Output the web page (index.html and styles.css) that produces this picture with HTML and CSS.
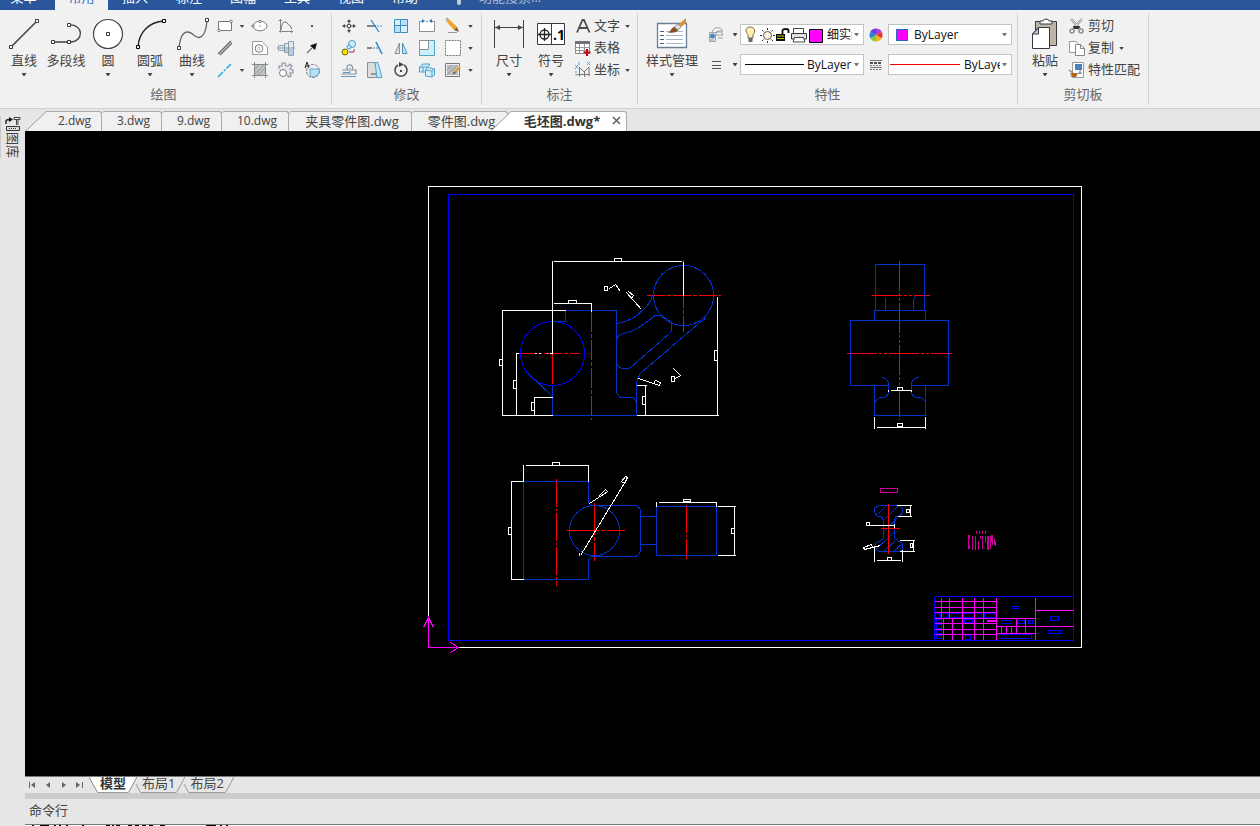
FILE: index.html
```
<!DOCTYPE html>
<html lang="zh-CN">
<head>
<meta charset="utf-8">
<title>毛坯图.dwg</title>
<link rel="stylesheet" href="styles.css">
</head>
<body>
<nav class="menubar">
  <button class="menu first">菜单</button>
  <button class="menu current">常用</button>
  <button class="menu">插入</button>
  <button class="menu">标注</button>
  <button class="menu">图幅</button>
  <button class="menu">工具</button>
  <button class="menu">视图</button>
  <button class="menu">帮助</button>
  <button class="menu search"><svg width="6" height="16" viewBox="0 0 6 16"><path d="M3 3V14" stroke="#c8cdd6" stroke-width="4" stroke-linecap="round"/></svg>功能搜索...</button>
</nav>

<section class="ribbon">
  <div class="group draw">
    <div class="tools">
      <button class="big"><svg width="36" height="36" viewBox="0 0 36 36"><path d="M5 32L31 6" stroke="#3f444c" stroke-width="1.6"/><g fill="#fff" stroke="#333a44"><path d="M3.5 30.5h3v3h-3zM29.500 4.500h3v3h-3z"/></g></svg><span>直线</span><i class="arrow"></i></button>
      <button class="big"><svg width="36" height="36" viewBox="0 0 36 36"><path d="M5 27H21M21 10C36 9 36 27 22 27" fill="none" stroke="#3f444c" stroke-width="1.300"/><g fill="#fff" stroke="#333a44"><path d="M3.500 25.500h3v3h-3zM19.500 25.500h3v3h-3zM19.500 8.500h3v3h-3z"/></g></svg><span>多段线</span></button>
      <button class="big"><svg width="36" height="36" viewBox="0 0 36 36"><circle cx="18" cy="19" r="14.500" fill="#fff" stroke="#3f444c" stroke-width="1.200"/><path d="M16.500 17.500h3v3h-3z" fill="#fff" stroke="#333a44"/></svg><span>圆</span><i class="arrow"></i></button>
      <button class="big"><svg width="36" height="36" viewBox="0 0 36 36"><path d="M6 32C7 17 17 7 32 6" fill="none" stroke="#222" stroke-width="1.400"/><path d="M4.500 30.500h3v3h-3zM30.500 4.500h3v3h-3z" fill="#fff" stroke="#000"/></svg><span>圆弧</span><i class="arrow"></i></button>
      <button class="big"><svg width="36" height="36" viewBox="0 0 36 36"><path d="M5 32C6 26 7 17 14 17C19 17 20 23 25 22.500C31 21 32 14 33 6" fill="none" stroke="#666" stroke-width="1.300"/><path d="M3.500 31.500h3v3h-3zM31.500 3.500h3v3h-3z" fill="#fff" stroke="#333a44"/></svg><span>曲线</span><i class="arrow"></i></button>
      <div class="grid draw-grid">
        <button aria-label="矩形"><svg width="18" height="18" viewBox="0 0 18 18"><path d="M2.500 4.500H15.500V13.500H2.500z" fill="#fff" stroke="#777"/><g fill="#fff" stroke="#777"><circle cx="15" cy="4.500" r="1.300"/><circle cx="3" cy="13.500" r="1.300"/></g></svg></button>
        <button aria-label="矩形选项"><i class="arrow"></i></button>
        <button aria-label="椭圆"><svg width="18" height="18" viewBox="0 0 18 18"><ellipse cx="9" cy="9" rx="7" ry="4.800" fill="#fff" stroke="#777"/><g fill="#fff" stroke="#777"><circle cx="2" cy="9" r="1.200"/><circle cx="9" cy="4.500" r="1.200"/></g><path d="M8.500 8.500h1v1h-1z" fill="#555"/></svg></button>
        <button aria-label="公式曲线"><svg width="18" height="18" viewBox="0 0 18 18"><path d="M3.500 2V15.500M1.500 3.500H5M2 14.500H16M14.500 13V16" fill="none" stroke="#888"/><path d="M4 13C5 3 9 2 15 12" fill="none" stroke="#666"/></svg></button>
        <button aria-label="点"><svg width="18" height="18" viewBox="0 0 18 18"><path d="M8 8h2v2H8z" fill="#555"/></svg></button>
        <button aria-label="平行线"><svg width="18" height="18" viewBox="0 0 18 18"><path d="M2 15L15 2M4 16L16 4" stroke="#666" stroke-width="1.400"/></svg></button>
        <span></span>
        <button aria-label="局部放大"><svg width="18" height="18" viewBox="0 0 18 18"><path d="M1.500 2.500H11L16.500 8V15.500H1.500z" fill="#fff" stroke="#999"/><circle cx="8" cy="9.500" r="3.800" fill="#fff" stroke="#777"/><circle cx="8" cy="9.500" r="1.200" fill="#fff" stroke="#bbb"/></svg></button>
        <button aria-label="孔轴"><svg width="18" height="18" viewBox="0 0 18 18"><path d="M1.500 6.500H7.500V4.500H11.500V2.500H16.500V16.500H11.500V13.500H7.500V11.500H1.500z" fill="#e4eaf1" stroke="#98a2ae"/><path d="M8 10H16V16H12V13H8z" fill="#b2ccea"/><path d="M0 9H18" stroke="#6e9cc8"/><path d="M7.500 5V13M11.500 3V16" stroke="#899"/></svg></button>
        <button aria-label="箭头"><svg width="18" height="18" viewBox="0 0 18 18"><path d="M4 14L9 9" stroke="#777" stroke-width="1.300"/><path d="M14 4L12 11L7 6.500z" fill="#111"/></svg></button>
        <button aria-label="中心线"><svg width="18" height="18" viewBox="0 0 18 18"><path d="M2 16L15 3" stroke="#1da5e8" stroke-width="1.400" stroke-dasharray="7 1.500 2 1.500"/></svg></button>
        <button aria-label="中心线选项"><i class="arrow"></i></button>
        <button aria-label="剖面线"><svg width="18" height="18" viewBox="0 0 18 18"><path d="M3 3H15V12L12 15H3z" fill="#bcc2c2"/><path d="M4 8L8 4M4 13L13 4M7 14L14 7" stroke="#9a9f9f"/><path d="M3.500 1V17M14.500 1V17M1 3.500H17M1 14.500H17" stroke="#888"/></svg></button>
        <button aria-label="齿轮"><svg width="18" height="18" viewBox="0 0 18 18"><path d="M2 8V5L5 5L5 2H8L9 5L11 5L13 3L15 5L13 8L16 9V12L13 12L14 15L12 16L10 14" fill="#e7e9ee" stroke="#8d949e" stroke-width="1.200"/><circle cx="6" cy="12" r="3.500" fill="#fff" stroke="#777"/></svg></button>
        <button aria-label="文字填充"><svg width="18" height="18" viewBox="0 0 18 18"><circle cx="10" cy="10" r="6.500" fill="#eee" stroke="#777" stroke-dasharray="3 1"/><path d="M7 8H16C17 12 14 16 10 16C8 16 7 14 7 13z" fill="#b6e0f5" stroke="#6aa6cc"/><path d="M2 7L4 1L6 7M3 5H6" fill="none" stroke="#222"/></svg></button>
      </div>
    </div>
    <h2>绘图</h2>
  </div>

  <div class="group modify">
    <div class="tools">
      <div class="grid modify-grid">
        <button aria-label="平移"><svg width="18" height="18" viewBox="0 0 18 18"><path d="M9 2L11 5H7zM9 16L11 13H7zM2 9L5 7V11zM16 9L13 7V11z" fill="#44484e"/><path d="M9 4V7M9 11V14M4 9H7M11 9H14" stroke="#555"/><path d="M7.500 7.500h3v3h-3z" fill="#fff" stroke="#555"/></svg></button>
        <button aria-label="裁剪"><svg width="18" height="18" viewBox="0 0 18 18"><path d="M1 9H10" stroke="#555" stroke-width="1.400"/><path d="M11 9H17" stroke="#4e9ed8" stroke-dasharray="2 1"/><path d="M5 3L13 15" stroke="#2f86c8" stroke-width="1.300"/></svg></button>
        <button aria-label="阵列"><svg width="18" height="18" viewBox="0 0 18 18"><g stroke="#3d8ebf"><path d="M2.500 2.500h6v6h-6zM8.500 8.500h7v7h-7z" fill="#d9f0fc"/><path d="M8.500 2.500h7v6h-7zM2.500 8.500h6v7h-6z" fill="#b9e2fa"/></g></svg></button>
        <button aria-label="打断"><svg width="18" height="18" viewBox="0 0 18 18"><path d="M5 4.500H1.500V14.500H16.500V4.500H13M8 4.500H10" fill="#fff" stroke="#8b9096"/><path d="M4 2L7 4L4 6zM14 2L11 4L14 6z" fill="#1f78c0"/></svg></button>
        <button aria-label="擦除"><svg width="18" height="18" viewBox="0 0 18 18"><path d="M2 4L5 2L13 10L10 13z" fill="#eda52d"/><path d="M10 13L13 10L15 15z" fill="#7a5a3a"/><path d="M2 3L4 1" stroke="#aaa" stroke-width="2"/><path d="M4 15.500H13" stroke="#999"/></svg></button>
        <button aria-label="擦除选项"><i class="arrow"></i></button>
        <button aria-label="复制对象"><svg width="18" height="18" viewBox="0 0 18 18"><g fill="#cfeafa" stroke="#4a9dcc"><circle cx="12" cy="5" r="3.500"/><circle cx="9" cy="8" r="2"/></g><circle cx="5" cy="13" r="3" fill="#f7df00" stroke="#6d6d00"/><path d="M9 13H14V10" fill="none" stroke="#a33"/></svg></button>
        <button aria-label="延伸"><svg width="18" height="18" viewBox="0 0 18 18"><path d="M1 9H6" stroke="#555" stroke-width="1.400"/><path d="M7 9H12" stroke="#2f86c8" stroke-dasharray="2 1"/><path d="M10 3L16 15" stroke="#2f86c8" stroke-width="1.500"/></svg></button>
        <button aria-label="镜像"><svg width="18" height="18" viewBox="0 0 18 18"><path d="M7.500 4V14.500H3z" fill="#ddd" stroke="#8b9096"/><path d="M10.500 4V14.500H15z" fill="#c3e6f7" stroke="#4b90b8"/></svg></button>
        <button aria-label="缩放"><svg width="18" height="18" viewBox="0 0 18 18"><path d="M1.500 1.500H16.500V16.500H1.500z" fill="#cdeefb" stroke="#55a5c8"/><path d="M1.500 1.500H10.500V10.500H1.500z" fill="#fff" stroke="#8b9096"/></svg></button>
        <button aria-label="拉伸"><svg width="18" height="18" viewBox="0 0 18 18"><path d="M1.500 1.500H16.500V16.500H1.500z" fill="#fff" stroke="#777" stroke-dasharray="2 1"/></svg></button>
        <button aria-label="拉伸选项"><i class="arrow"></i></button>
        <button aria-label="等距线"><svg width="18" height="18" viewBox="0 0 18 18"><path d="M1.500 13H16V9H12C15 3 6 2 7 7L8 9H2" fill="none" stroke="#8b9096" stroke-width="1.200"/><path d="M1 15.500H16M3 11.500H10V7" fill="none" stroke="#5a9dcc"/></svg></button>
        <button aria-label="过渡"><svg width="18" height="18" viewBox="0 0 18 18"><path d="M1.500 1.500H9L12 16.500H1.500z" fill="#ddd" stroke="#8b9096"/><path d="M9 1.500H12L16 16.500H11z" fill="#bfe7f8" stroke="#5ba5c8"/><path d="M5 13H10" stroke="#555"/></svg></button>
        <button aria-label="旋转"><svg width="18" height="18" viewBox="0 0 18 18"><path d="M6 4A6 6 0 1 0 12 4" fill="none" stroke="#444" stroke-width="1.500"/><path d="M7 1L12 3.500L7 6z" fill="#444"/><path d="M8 9h2v2H8z" fill="#444"/></svg></button>
        <button aria-label="三维块"><svg width="18" height="18" viewBox="0 0 18 18"><g stroke="#4ba0cc" fill="#d5effa"><path d="M1.500 6L5 3H12L9 6.500V11H1.500z"/><path d="M1.500 6H9M5 6V11" fill="none"/><path d="M7.500 9L10 6.500L16.500 8V14L14 16L7.500 15z"/><path d="M7.500 9L14 10V16M14 10L16.500 8" fill="none"/></g></svg></button>
        <button aria-label="块编辑"><svg width="18" height="18" viewBox="0 0 18 18"><path d="M1.500 2.500H15.500V15.500H1.500z" fill="#eee" stroke="#777"/><path d="M3 4H14V14H3z" fill="#b9bdbd"/><path d="M3 9L8 4M3 14L13 4M8 14L14 8" stroke="#999"/><path d="M16 6L11 11" stroke="#e0a02a" stroke-width="2.200"/><path d="M9 13L10 10.500L12 12z" fill="#444"/></svg></button>
        <button aria-label="块编辑选项"><i class="arrow"></i></button>
      </div>
    </div>
    <h2>修改</h2>
  </div>

  <div class="group dims">
    <div class="tools">
      <button class="big"><svg width="36" height="36" viewBox="0 0 36 36"><path d="M3.500 5V33M32.500 5V33M4 12.500H32" stroke="#3f444c"/><path d="M4 12.500L9 10V15zM32 12.500L27 10V15z" fill="#3f444c"/></svg><span>尺寸</span><i class="arrow"></i></button>
      <button class="big"><svg width="36" height="36" viewBox="0 0 36 36"><path d="M4.500 8.500H31.500V29.500H4.500zM18.500 8.500V29.500" fill="#fff" stroke="#333a44"/><circle cx="11.500" cy="19.500" r="4.500" fill="none" stroke="#222" stroke-width="1.300"/><path d="M5 19.500H18M11.500 13V26" stroke="#222" stroke-width="1.300"/><text class="tol" x="20" y="25">.1</text></svg><span>符号</span><i class="arrow"></i></button>
      <div class="rows">
        <button class="row"><svg width="18" height="18" viewBox="0 0 18 18"><path d="M3 15.500L8.500 3H10L15.500 15.500M5 11H13.500" fill="none" stroke="#4a4d52" stroke-width="1.800"/></svg><span>文字</span><i class="arrow"></i></button>
        <button class="row"><svg width="18" height="18" viewBox="0 0 18 18"><path d="M1.500 2.500H15.500V14.500H1.500z" fill="#fff" stroke="#888"/><path d="M1 2H16V5H1z" fill="#6d7278"/><path d="M1 8.500H16M1 11.500H16M5.500 5V15M10.500 5V15" stroke="#999"/><path d="M13 10V17M9.500 13.500H16.500" stroke="#c00018" stroke-width="2"/></svg><span>表格</span></button>
        <button class="row"><svg width="18" height="18" viewBox="0 0 18 18"><path d="M5.500 6V15.500M3 13.500H16M6 7L10 11L15 6V15M10.500 10V16" fill="none" stroke="#777"/><path d="M1 4L4 7M4 4L1 8M13 1L16 4M16 1L13 4M5 1V4M1 11H3M1 14H3" stroke="#58a5d4"/></svg><span>坐标</span><i class="arrow"></i></button>
      </div>
    </div>
    <h2>标注</h2>
  </div>

  <div class="group props">
    <div class="tools">
      <button class="big wide"><svg width="36" height="36" viewBox="0 0 36 36"><path d="M3.500 8.500H32.500V32.500H3.500z" fill="#fff" stroke="#6b8096" stroke-width="1.300"/><path d="M6 16.500H10M6 20.500H10M6 24.500H10M6 28.500H10" stroke="#4d5f80"/><path d="M12 16.500H29M12 20.500H29M12 24.500H29M12 28.500H29" stroke="#aab6c8"/><path d="M32 3L24 10L27 12L32 8z" fill="#d99438"/><path d="M24 9L27 12L24 15L20 12z" fill="#ddd" stroke="#999"/><path d="M20 12L24 15C22 19 18 17 14 18C17 16 17 13 20 12z" fill="#83502a"/></svg><span>样式管理</span><i class="arrow"></i></button>
      <div class="prop-grid">
        <button aria-label="图层"><svg width="18" height="18" viewBox="0 0 18 18"><path d="M5 6L8 2H13L16 5H10L8 9zM8 9L10 6H14L16 9H10z" fill="#fff" stroke="#999"/><path d="M2.500 6.500H8.500V15.500H2.500z" fill="#e5e8eb" stroke="#9aa"/><circle cx="5.500" cy="10" r="2.500" fill="#4d87b8"/><path d="M3 14H7M11 12H16" stroke="#8aa"/></svg></button>
        <button aria-label="图层选项"><i class="arrow"></i></button>
        <label class="field"><svg width="86" height="18" viewBox="0 0 86 18" aria-hidden="true"><path d="M9 1C4 1 4 6 7 8.500V12H12V8.500C15 6 14 1 9 1z" fill="#ffefae" stroke="#7a6a48"/><path d="M7.500 12H11.500V16H7.500z" fill="#666"/><circle cx="26.500" cy="9.500" r="4" fill="#fff8df" stroke="#555"/><path d="M26.500 2V4M26.500 15V17M19 9.500H21M32 9.500H34M21 4L22.500 5.500M32 4L30.500 5.500M21 15L22.500 13.500M32 15L30.500 13.500" stroke="#333"/><path d="M41.500 9V4.500C41.500 2.500 47.500 2.500 47.500 4.500V7" fill="none" stroke="#111" stroke-width="1.800"/><path d="M35 8H44V15H35z" fill="#111"/><path d="M36 10H43M36 12.500H43" stroke="#c6c200"/><path d="M52.500 7V2.500H62.500V7" fill="#fff" stroke="#444"/><path d="M50.500 7.500H65.500V13H50.500z" fill="#dce2ea" stroke="#333"/><path d="M53.500 11.500H62.500L64 16H52z" fill="#fff" stroke="#444"/><path d="M68.500 3.500H81.500V16.500H68.500z" fill="#f0f" stroke="#000"/></svg><select aria-label="当前图层"><option>细实线层</option></select><i class="arrow"></i></label>
        <button aria-label="颜色"><svg width="18" height="18" viewBox="0 0 18 18"><path d="M9 9V2.500A6.500 6.500 0 0 1 14.600 5.750z" fill="#a63fe0"/><path d="M9 9L14.600 5.750A6.500 6.500 0 0 1 14.600 12.250z" fill="#e93235"/><path d="M9 9L14.600 12.250A6.500 6.500 0 0 1 9 15.500z" fill="#f2b51f"/><path d="M9 9V15.500A6.500 6.500 0 0 1 3.400 12.250z" fill="#7ccf3a"/><path d="M9 9L3.400 12.250A6.500 6.500 0 0 1 3.400 5.750z" fill="#2a7fd8"/><path d="M9 9L3.400 5.750A6.500 6.500 0 0 1 9 2.500z" fill="#6a3fe0"/></svg></button>
        <label class="field color"><span class="swatch"></span><select aria-label="颜色"><option>ByLayer</option></select><i class="arrow"></i></label>

        <button aria-label="线型"><svg width="18" height="18" viewBox="0 0 18 18"><path d="M5 5.500H14M5 9.500H14M5 12.500H14" stroke="#555"/></svg></button>
        <button aria-label="线型选项"><i class="arrow"></i></button>
        <label class="field line"><span class="sample black"></span><select aria-label="线型"><option>ByLayer</option></select><i class="arrow"></i></label>
        <button aria-label="线宽"><svg width="18" height="18" viewBox="0 0 18 18"><path d="M3 4.500H15M3 11.500H15" stroke="#777"/><path d="M3 7H15" stroke="#555" stroke-width="2" stroke-dasharray="3 1"/><path d="M3 9.500H15M3 13.500H15" stroke="#777" stroke-dasharray="2 1"/></svg></button>
        <label class="field weight"><span class="sample red"></span><select aria-label="线宽"><option>ByLayer</option></select><i class="arrow"></i></label>
      </div>
    </div>
    <h2>特性</h2>
  </div>

  <div class="group clip">
    <div class="tools">
      <button class="big"><svg width="36" height="36" viewBox="0 0 36 36"><path d="M8.500 6.500H29.500V30.500H8.500z" fill="#beb4a8" stroke="#333a44"/><path d="M13 9V6H16C16 3.500 22 3.500 22 6H25V9z" fill="#fff" stroke="#333a44"/><path d="M11 12.500H22.500V33.500H5.500V19z" fill="#fff" stroke="#333a44"/><path d="M11.500 13V19H5.500z" fill="#ccc" stroke="#333a44"/></svg><span>粘贴</span><i class="arrow"></i></button>
      <div class="rows">
        <button class="row"><svg width="18" height="18" viewBox="0 0 18 18"><path d="M3 2L12 12M14 2L5 12" stroke="#8b9096" stroke-width="2.500"/><path d="M3 2L12 12M14 2L5 12" stroke="#f5f5f5"/><path d="M5 9H12L11 12H6z" fill="#333"/><g fill="none" stroke="#8b9096" stroke-width="1.500"><circle cx="4" cy="14" r="2"/><circle cx="13" cy="14" r="2"/></g></svg><span>剪切</span></button>
        <button class="row"><svg width="18" height="18" viewBox="0 0 18 18"><path d="M1.500 2.500H8L11.500 6V13.500H1.500z" fill="#fff" stroke="#999"/><path d="M7.500 5.500H12.500L16.500 9.500V16.500H7.500z" fill="#fff" stroke="#888"/><path d="M12.500 5.500V9.500H16.500" fill="none" stroke="#888"/></svg><span>复制</span><i class="arrow"></i></button>
        <button class="row"><svg width="18" height="18" viewBox="0 0 18 18"><path d="M4.500 1.500H15.500V16.500H4.500z" fill="#fff" stroke="#999"/><path d="M7 3H14V9H7z" fill="#4a81b8"/><path d="M12 9V13M10 12H14" stroke="#778"/><path d="M1 9L5 12M2 13H5" stroke="#888" stroke-width="1.500"/><path d="M4 12L10 12L8 16L3 16z" fill="#b5651d"/></svg><span>特性匹配</span></button>
      </div>
    </div>
    <h2>剪切板</h2>
  </div>
</section>

<div class="workspace">
  <aside class="dock">
    <button class="library"><svg width="16" height="16" viewBox="0 0 16 16"><path d="M1 8V5C1 4 2 3.500 5 3.500" fill="none" stroke="#111" stroke-width="1.300"/><path d="M4 1L8 3.500L4 6z" fill="#111"/><path d="M9 1.500H15V3.500H9zM11.500 4V9M13 4V9" fill="none" stroke="#444"/><path d="M1.500 10.500H14.500V14.500H1.500z" fill="#ddd" stroke="#333"/><path d="M4 12.500H12" stroke="#333" stroke-dasharray="1 1"/></svg><span>图库</span></button>
  </aside>
  <main class="document">
    <div class="filetabs">
      <button class="file t1"><svg class="slant" width="20" height="20" viewBox="0 0 20 20"><path d="M0 20L20 0V20z" fill="#f0f0f0"/><path d="M0 20L20 .5" stroke="#999"/></svg><span>2.dwg</span></button>
      <button class="file"><span>3.dwg</span></button>
      <button class="file"><span>9.dwg</span></button>
      <button class="file t4"><span>10.dwg</span></button>
      <button class="file t5"><span>夹具零件图.dwg</span></button>
      <button class="file t6"><span>零件图.dwg</span></button>
      <div class="file active"><svg class="slant" width="20" height="20" viewBox="0 0 20 20"><path d="M0 20L20 0V20z" fill="#fff"/><path d="M0 20L20 .5" stroke="#999"/></svg><span><b>毛坯图.dwg*</b><button class="close" aria-label="关闭"><svg width="9" height="9" viewBox="0 0 9 9"><path d="M1 1L8 8M8 1L1 8" stroke="#666" stroke-width="1.600"/></svg></button></span></div>
    </div>
    <div class="canvas">
      <svg class="drawing" viewBox="25 131 1235 645" shape-rendering="crispEdges" fill="none">
        <g transform="translate(.5 .5)">
          <!-- sheet frames -->
          <path class="w" d="M428 186H1081V647H428z"/>
          <path class="b" d="M448 194H1073V640H448z"/>

          <!-- front view -->
          <g class="r">
            <path d="M646 295H720M517 353H579" stroke-dasharray="18 2 4 2"/>
            <path d="M683 259V331M591 311V419" stroke-dasharray="20 2 4 2"/>
            <path d="M552 353V383"/>
          </g>
          <circle class="b" cx="552" cy="353" r="32"/>
          <g class="n">
            <circle cx="683" cy="295" r="30"/>
            <path d="M565 310H616V389C616 394 618 397 623 397H630C633 397 635 399 636 402M565 310V321H552M552 385V415H636V382C637 378 638 375 641 372L698 323L706 317M528 373L552 396"/>
            <path d="M616 323C632 320 637 315 646 306C650 302 652 296 652 294M616 341C616 337 618 334 623 333C633 331 640 327 653 316C656 314 661 314 664 317L670 321C672 326 671 331 669 333L630 367C624 370 616 368 616 361"/>
          </g>
          <g class="w">
            <path d="M552 260V353M553 261H681M683 261V295M614 258H621V261H614zM553 303H590M568 300H576V303H568zM591 302V311"/>
            <path d="M501 310H565M502 310V415M499 359H502V365H499zM501 415H552M515 353H518M516 353V415M513 380H516V388H513zM533 397H552M534 397V415M531 402H534V410H531z"/>
            <path d="M636 415H718M717 296V415M714 350H717V360H714zM636 385H646M645 385V415M642 396H645V404H642zM534 353H536M538 353H540M546 353H547M549 353H551"/>
            <path d="M626 292L641 309M628 291L633 295L631 298M604 286H607V290H604zM609 288L615 284L620 291M638 378L653 383L655 380L660 382L659 385L653 383M673 368L680 375L675 378M671 376H674V381H671z"/>
          </g>

          <!-- top view -->
          <g class="r">
            <path d="M556 478V585M686 504V558" stroke-dasharray="28 2 2 2"/>
            <path d="M566 530H624M594 502V560" stroke-dasharray="32 2 4 2"/>
          </g>
          <g class="n">
            <path d="M588 502V481H523V579H588V559L591 556H634C638 556 640 552 640 548V512C640 508 638 505 634 505H591L588 502"/>
            <circle cx="594" cy="530" r="25"/>
            <path d="M640 516H656M640 544H656M656 506H716V555H656z"/>
          </g>
          <g class="w">
            <path d="M525 465H587M523 464V481M588 464V481M552 462H559V465H552zM510 481H523M510 579H523M511 481V579M508 527H511V534H508z"/>
            <path d="M658 502H716M656 501V506M716 501V506M683 499H690V501H683zM717 506H735M717 555H735M734 506V555M731 528H734V533H731z"/>
            <path d="M580 555L625 481M579 552V555M621 481L625 476L627 477L624 483zM589 503L607 491M599 495L605 489L607 491L600 496z"/>
          </g>

          <!-- side view -->
          <path class="r" d="M899 260V419M871 295H929M846 353H951" stroke-dasharray="30 2 3 2 3 2"/>
          <g class="n">
            <path d="M875 264H924V310H875zM885 310V297M913 310V299L915 296M874 320V310H925V320M888 385H850V320H948V385H911M874 385V415H925V385"/>
            <path d="M881 377C886 377 888 381 888 385V391C888 395 885 397 881 397C878 397 875 400 875 402M918 377C913 377 911 381 911 385V391C911 395 914 397 918 397C921 397 925 400 925 402"/>
          </g>
          <path class="w" d="M890 390H910M888 389V391M911 389V391M897 387H902V390H897zM874 416V428M925 416V428M876 427H924M897 423H902V426H897z"/>

          <!-- section -->
          <path class="m" d="M880 488H897V492H880z"/>
          <path class="n" d="M878 505H899L902 508V512L899 516H895L894 519V538L897 540L902 543V549L899 551H878L875 548V543L880 540L883 538V520L881 516H877L874 512V508zM877 514L886 505M884 519L897 506M884 531L901 513M884 541L894 531M876 548L886 539M883 551L895 540M893 551L902 543"/>
          <path class="r" d="M888 503V553M880 528H899"/>
          <path class="w" d="M896 505H911M897 516H911M910 505V516M906 509H909V512H906zM867 525H893M866 522H869V525H866zM894 523V527M899 540H914M899 551H914M913 540V551M910 543H912V547H910zM874 546V561M902 549V561M876 560H900M887 557H891V560H887zM863 547L871 544L872 547L864 549zM872 547L880 545"/>
          <path class="m" d="M976 530V533M979 530V533M982 530V533M985 530V533M968 534V548M969 534V538M969 544V548M972 535V549M975 535V549M978 540V549M980 535V538M982 535V548M985 535V542M987 535V549M988 535V549M990 535V548M991 534V541M992 534V544M994 538V544M995 540V545"/>

          <!-- title block -->
          <path class="b" d="M934 596H1073M934 596V640M935 613H940V617H935zM943 613H948V617H943zM951 613H961V617H951zM963 613H974V617H963zM977 613H981V617H977zM984 613H995V617H984zM936 619H941V622H936zM936 624H941V628H936zM936 630H941V633H936zM936 635H941V638H936zM964 619H972V622H964zM965 635H970V639H965zM1012 606H1019V608H1012zM1050 616H1058V620H1050zM1048 630H1060V633H1048zM1001 620H1011V623H1001zM1017 620H1024V623H1017zM1028 620H1032V623H1028zM999 634H1031V638H999z"/>
          <path class="p" d="M934 601H996M934 607H996M934 612H996M934 618H1035M934 623H996M934 629H996M934 634H996M941 597V618M949 597V618M943 618V639M952 618V639M962 597V639M974 597V639M983 597V639M996 597V639M1035 597V639M996 626H1073M996 633H1035M1016 618V633M1025 618V633M1001 626V633M1006 626V633M1011 626V633M1035 610H1073M986 620H995M986 621H995"/>

          <!-- coordinate axes -->
          <path class="p" d="M428 617V647H458M423 627L428 617L433 627M450 642L458 647L450 652"/>
        </g>
      </svg>
    </div>
    <div class="sheets">
      <div class="pager">
        <button aria-label="第一页"><svg width="9" height="8" viewBox="0 0 9 8"><path d="M1.500 1V7" stroke="#666"/><path d="M7 1V7L3 4z" fill="#666"/></svg></button>
        <button aria-label="上一页"><svg width="9" height="8" viewBox="0 0 9 8"><path d="M6 1V7L2 4z" fill="#666"/></svg></button>
        <button aria-label="下一页"><svg width="9" height="8" viewBox="0 0 9 8"><path d="M3 1V7L7 4z" fill="#666"/></svg></button>
        <button aria-label="最后一页"><svg width="9" height="8" viewBox="0 0 9 8"><path d="M1 1V7L5 4z" fill="#666"/><path d="M7.500 1V7" stroke="#666"/></svg></button>
      </div>
      <button class="sheet on"><svg width="9" height="16" viewBox="0 0 9 16"><path d="M0 0L9 16V0z" fill="#fff"/><path d="M0 0L8.500 15.500" stroke="#888"/></svg><span>模型</span><svg width="9" height="16" viewBox="0 0 9 16"><path d="M9 0L0 16V0z" fill="#fff"/><path d="M9 0L.5 15.500" stroke="#888"/></svg></button>
      <button class="sheet"><svg width="9" height="16" viewBox="0 0 9 16"><path d="M4 7L8.500 15.500" stroke="#999"/></svg><span>布局1</span><svg width="9" height="16" viewBox="0 0 9 16"><path d="M9 0L.5 15.500" stroke="#999"/></svg></button>
      <button class="sheet"><svg width="9" height="16" viewBox="0 0 9 16"><path d="M4 7L8.500 15.500" stroke="#999"/></svg><span>布局2</span><svg width="9" height="16" viewBox="0 0 9 16"><path d="M9 0L.5 15.500" stroke="#999"/></svg></button>
    </div>
    <div class="splitter"></div>
    <div class="command">命令行</div>
    <div class="log"><svg width="210" height="1" viewBox="0 0 210 1"><path d="M7 .5H9M15 .5H24M29 .5H31M34 .5H36M41 .5H43M57 .5H59M81 .5H85M87 .5H89M91 .5H95M103 .5H107M110 .5H114M117 .5H121M124 .5H128M135 .5H140M181 .5H191M195 .5H197M201 .5H203" stroke="#000"/></svg></div>
  </main>
</div>
</body>
</html>
```

FILE: styles.css
```
* { box-sizing: border-box; }

body {
  margin: 0;
  height: 100vh;
  display: flex;
  flex-direction: column;
  overflow: hidden;
  background: #e6e6e6;
  color: #444;
  font: 13px/20px "Open Sans", "Noto Sans CJK SC", sans-serif;
}

button {
  margin: 0;
  padding: 0;
  border: 0;
  background: none;
  color: inherit;
  font: inherit;
}

svg { display: block; flex: none; }

.arrow {
  width: 5px;
  height: 3px;
  background: #444;
  clip-path: polygon(0 0, 100% 0, 60% 100%, 40% 100%);
  flex: none;
}

/* menu bar */
.menubar {
  flex: none;
  height: 10px;
  display: flex;
  align-items: flex-end;
  overflow: hidden;
  background: #2b579a;
  color: #fff;
}
.menu { height: 26px; width: 54px; flex: none; }
.menu.first { padding-right: 8px; width: 55px; }
.menu.current { width: 53px; background: #f1f1f1; color: #2b6cc4; }
.search {
  width: 120px;
  margin-left: 20px;
  display: flex;
  align-items: center;
  gap: 17px;
  padding-left: 4px;
  color: #a9bbd8;
}

/* ribbon */
.ribbon {
  flex: none;
  display: flex;
  background: #f1f1f1;
  border-bottom: 1px solid #d0d0d0;
  padding: 3px 0;
}
.group {
  display: flex;
  flex-direction: column;
  border-right: 1px solid #d2d2d2;
  flex: none;
}
.group h2 {
  margin: 0;
  padding-top: 2px;
  font-size: 13px;
  font-weight: 400;
  line-height: 22px;
  text-align: center;
  color: #666;
}
.tools { display: flex; padding-top: 2px; height: 68px; }
.draw { width: 332px; }
.draw .tools { padding-left: 3px; }
.draw h2 { padding-right: 4px; }
.modify { width: 150px; }
.modify .tools { padding-left: 4px; }
.dims { width: 156px; }
.dims .tools { padding-left: 6px; }
.props { width: 380px; }
.props .tools { padding-left: 4px; }
.clip { width: 131px; }
.clip .tools { padding-left: 6px; }

.big {
  width: 42px;
  display: flex;
  flex-direction: column;
  align-items: center;
  white-space: nowrap;
}
.big span { line-height: 18px; }
.big .arrow { margin-top: 4px; }
.big.wide { width: 60px; }
.tol { font: bold 14px "Open Sans", sans-serif; fill: #000; }

.grid { display: grid; grid-auto-rows: 22px; }
.grid button, .prop-grid button { display: grid; place-items: center; }
.draw-grid { grid-template-columns: 24px 10px 26px 26px 26px; }
.modify-grid { grid-template-columns: repeat(5, 26px) 9px; }

.rows { display: flex; flex-direction: column; padding-left: 2px; }
.row {
  height: 22px;
  display: flex;
  align-items: center;
  gap: 2px;
  white-space: nowrap;
}
.row span { line-height: 18px; padding-bottom: 2px; }
.row .arrow { margin-left: 3px; }

.prop-grid {
  display: grid;
  grid-template-columns: 28px 10px 124px 24px 124px;
  grid-auto-rows: 21px;
  row-gap: 9px;
  align-content: start;
  padding-top: 9px;
}
.field {
  display: flex;
  align-items: center;
  background: #fff;
  border: 1px solid #c3c3c3;
  padding-right: 4px;
  overflow: hidden;
}
.field select {
  flex: 1;
  min-width: 0;
  appearance: none;
  border: 0;
  margin: 0 2px 0 0;
  padding: 0;
  background: none;
  color: #111;
  font: 12px/18px "Open Sans", "Noto Sans CJK SC", sans-serif;
  text-overflow: clip;
}
.field .arrow { background: #777; }
.swatch {
  width: 12px;
  height: 12px;
  margin: 0 6px 0 7px;
  background: #f0f;
  border: 1px solid #2a64c0;
  flex: none;
}
.sample { height: 1px; flex: none; }
.sample.black { width: 59px; margin: 0 3px 0 4px; background: #000; }
.sample.red { width: 70px; margin: 0 4px 0 1px; background: #f00000; }

/* workspace */
.workspace { flex: 1; min-height: 0; display: flex; }
.dock { width: 25px; flex: none; padding-top: 7px; }
.library {
  width: 24px;
  height: 42px;
  border-left: 1px solid #ccc;
  display: flex;
  flex-direction: column;
  align-items: center;
}
.library span {
  writing-mode: vertical-rl;
  text-orientation: sideways;
  font-size: 13px;
  line-height: 16px;
}

.document { flex: 1; min-width: 0; display: flex; flex-direction: column; }

.filetabs {
  flex: none;
  height: 22px;
  padding: 2px 0 0 1px;
  display: flex;
  font-size: 12px;
}
.file { display: flex; width: 60px; height: 20px; flex: none; }
.file > span {
  flex: 1;
  display: flex;
  align-items: center;
  justify-content: center;
  background: #f0f0f0;
  border: 1px solid #aaa;
  border-width: 1px 1px 0 0;
  border-radius: 3px 3px 0 0;
  padding: 0 0 2px 4px;
  white-space: nowrap;
}
.t1 { width: 76px; }
.t1 > span, .active > span { border-top-left-radius: 0; }
.t1 > span { padding-left: 2px; }
.t4 { width: 67px; }
.t5 { width: 123px; font-size: 13px; }
.t6 { width: 96px; font-size: 13px; }
.active { width: 136px; margin-left: -17px; font-size: 13px; color: #333; }
.active > span { background: #fff; gap: 12px; padding-left: 8px; }

.canvas { flex: 1; min-height: 0; background: #000; }
.drawing { width: 100%; height: 100%; }
.w { stroke: #fff; }
.b { stroke: #00f; }
.n { stroke: #0033cc; }
.r { stroke: #f00; }
.p { stroke: #f0f; }
.m { stroke: #c80096; }

.sheets {
  flex: none;
  height: 17px;
  border-top: 1px solid #777;
  display: flex;
}
.pager { width: 64px; padding-right: 2px; display: flex; align-items: center; flex: none; }
.pager button { flex: 1; height: 16px; display: grid; place-items: center; }
.sheet { display: flex; height: 16px; margin-left: -5px; }
.sheet.on { margin-left: 0; font-weight: 700; color: #333; }
.sheet span { height: 16px; line-height: 13px; border-bottom: 1px solid #999; padding: 0 1px; }
.sheet.on span { background: #fff; padding: 0 2px; }
.splitter { flex: none; height: 6px; background: #ccc; }
.command { flex: none; line-height: 22px; height: 25px; padding-left: 4px; }
.log {
  flex: none;
  height: 2px;
  background: #fff;
  border-top: 1px solid #777;
  overflow: hidden;
}
```
